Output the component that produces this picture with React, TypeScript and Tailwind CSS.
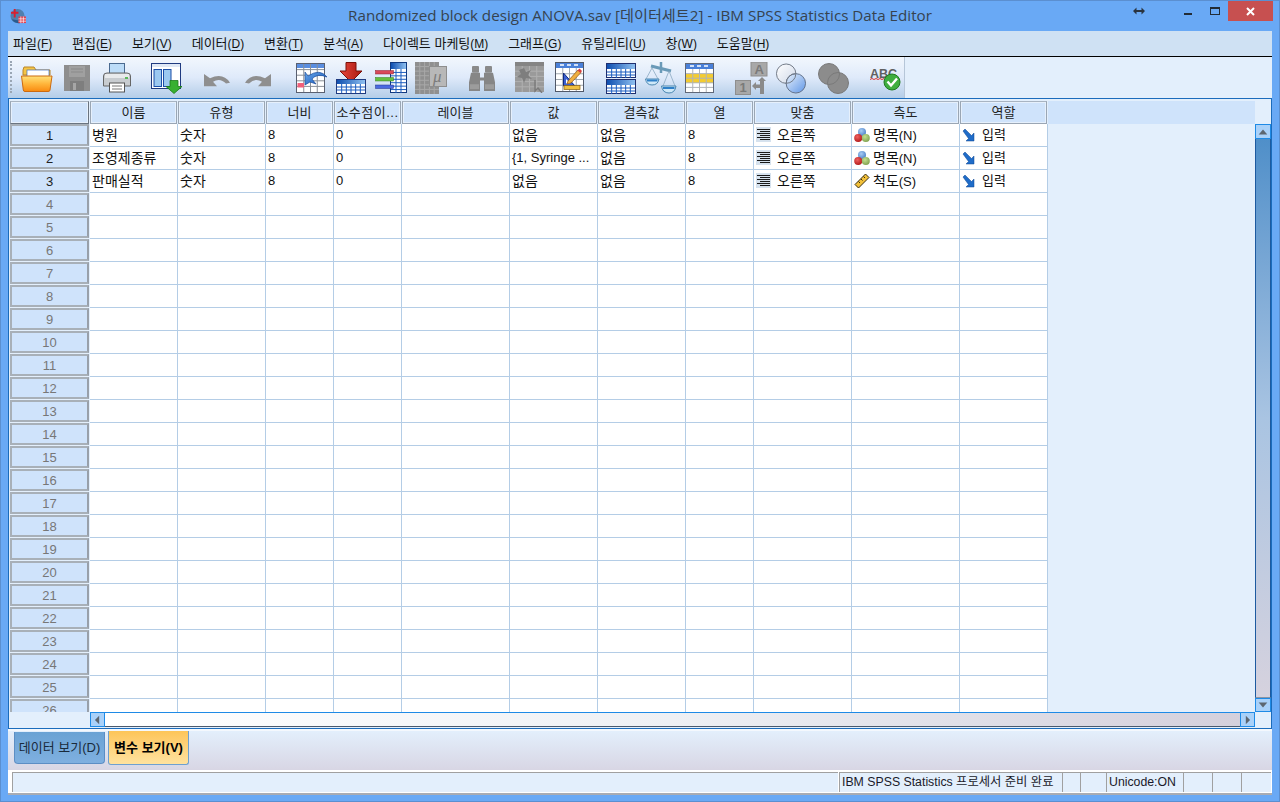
import React from "react";

const cols = "grid grid-cols-[80px_88px_88px_68px_68px_108px_88px_88px_68px_98px_108px_88px]";

function Defs() {
  return (
    <svg width="0" height="0" className="absolute">
      <defs>
        <linearGradient id="fo" x1="0" y1="0" x2="0" y2="1"><stop offset="0" stopColor="#ffe27a" /><stop offset="0.5" stopColor="#ffb63c" /><stop offset="1" stopColor="#f98a10" /></linearGradient>
        <linearGradient id="hb" x1="0" y1="0" x2="1" y2="0"><stop offset="0" stopColor="#0f4fb0" /><stop offset="1" stopColor="#8fc0f0" /></linearGradient>
        <linearGradient id="bl" x1="0" y1="0" x2="1" y2="1"><stop offset="0" stopColor="#e8f0fa" /><stop offset="1" stopColor="#5f97e8" /></linearGradient>
        <linearGradient id="wb" x1="0" y1="0" x2="1" y2="1"><stop offset="0" stopColor="#ffffff" /><stop offset="1" stopColor="#cfd8e8" /></linearGradient>
        <linearGradient id="ar" x1="0" y1="0" x2="1" y2="1"><stop offset="0" stopColor="#6aa8ea" /><stop offset="1" stopColor="#0d4fb5" /></linearGradient>
        <linearGradient id="red" x1="0" y1="0" x2="1" y2="0"><stop offset="0" stopColor="#e8483c" /><stop offset="1" stopColor="#a81810" /></linearGradient>
        <radialGradient id="rb" cx="0.4" cy="0.35" r="0.7"><stop offset="0" stopColor="#f06060" /><stop offset="1" stopColor="#b01818" /></radialGradient>
        <radialGradient id="gb" cx="0.4" cy="0.35" r="0.7"><stop offset="0" stopColor="#c4e090" /><stop offset="1" stopColor="#7ea04e" /></radialGradient>
        <radialGradient id="ub" cx="0.4" cy="0.35" r="0.7"><stop offset="0" stopColor="#a8ccf4" /><stop offset="1" stopColor="#4a80c8" /></radialGradient>
      </defs>
    </svg>
  );
}

function TableLines({ x, y, w, h, c, r, color = "#1a5cc0" }: { x: number; y: number; w: number; h: number; c: number; r: number; color?: string }) {
  const out: React.ReactNode[] = [];
  for (let i = 1; i < c; i++) { const p = x + (w * i) / c; out.push(<path key={"c" + i} d={`M${p} ${y}V${y + h}`} stroke={color} strokeWidth="1" />); }
  for (let i = 1; i < r; i++) { const p = y + (h * i) / r; out.push(<path key={"r" + i} d={`M${x} ${p}H${x + w}`} stroke={color} strokeWidth="1" />); }
  return <>{out}</>;
}

function Folder() {
  return (
    <svg width="32" height="28" viewBox="0 0 32 28" className="ml-[9px] mt-[8px] shrink-0">
      <path d="M2 5 L3 2 H13 L15 5 H29 V10 H2Z" fill="#f5c445" stroke="#b8862a" />
      <rect x="6" y="5" width="22" height="7" fill="#fff" stroke="#3f6fc0" strokeWidth="0.7" />
      <path d="M.5 11 H31 L29 25 Q29 26.5 27 26.5 H4 Q2.5 26.5 2.3 25Z" fill="url(#fo)" stroke="#cc6a10" />
    </svg>
  );
}
function Save() {
  return (
    <svg width="26" height="26" viewBox="0 0 26 26" className="ml-[11px] mt-[8px] shrink-0">
      <rect width="26" height="26" fill="#8e8e8e" />
      <rect x="5" y="1" width="16" height="11" fill="#a0a0a0" />
      <path d="M7 4H19M7 7H19" stroke="#8a8a8a" />
      <rect x="6" y="16" width="14" height="10" fill="#7e7e7e" />
      <rect x="9" y="18" width="3" height="7" fill="#a6a6a6" />
    </svg>
  );
}
function Printer() {
  return (
    <svg width="28" height="30" viewBox="0 0 28 30" className="ml-[13px] mt-[6px] shrink-0">
      <rect x="6.5" y=".5" width="15" height="11" fill="#bcdcf8" stroke="#4a6a90" />
      <path d="M.5 13 Q.5 10 4 10 H24 Q27.5 10 27.5 13 V23 H.5Z" fill="#c8ccd0" stroke="#666" />
      <rect x="2" y="11" width="24" height="4" fill="#e8eaec" />
      <rect x="22" y="14" width="3" height="2" fill="#5cb85c" />
      <rect x="6.5" y="20" width="15" height="9" fill="#fff" stroke="#555" />
      <path d="M9 23H19M9 26H19" stroke="#777" />
    </svg>
  );
}
function Goto() {
  return (
    <svg width="31" height="31" viewBox="0 0 31 31" className="ml-[20px] mt-[6px] shrink-0">
      <rect x=".5" y=".5" width="29" height="25" fill="#fff" stroke="#1f3a80" />
      <rect x="1" y="1" width="28" height="3" fill="#dfe8f5" />
      <rect x="3" y="6.5" width="7.5" height="17" fill="#9cc8f0" stroke="#1a4ea8" />
      <rect x="12.5" y="6.5" width="7.5" height="17" fill="#9cc8f0" stroke="#1a4ea8" />
      <path d="M19 17.5h8v6h4l-8 7-8-7h4z" fill="#38b030" stroke="#1c7a18" strokeWidth=".8" />
    </svg>
  );
}
function Undo({ flip }: { flip?: boolean }) {
  return (
    <svg width="27" height="14" viewBox="0 0 27 16" preserveAspectRatio="none" className={flip ? "ml-[15px] mt-[16px] shrink-0 -scale-x-100" : "ml-[21px] mt-[16px] shrink-0"}>
      <path d="M1 1 V15 H14 L10 10 Q17 5 23 12 L27 11 Q20 -1 7 6 L1 1Z" fill="#8f8f8f" />
    </svg>
  );
}
function Recall() {
  return (
    <svg width="31" height="31" viewBox="0 0 31 31" className="ml-[24px] mt-[6px] shrink-0">
      <rect x=".5" y=".5" width="28" height="29" fill="#fff" stroke="#5a6070" />
      <rect x="1" y="1" width="27" height="4" fill="#5a8ee0" />
      <TableLines x={1} y={1} w={27} h={28} c={4} r={5} color="#8a9098" />
      <rect x="1.5" y="20" width="6.5" height="4.5" fill="#f0607a" />
      <path d="M9 9 V22 L14 19 L20 21 L16 16 Q21 10 31 14 Q24 5 12 13 Z" fill="url(#ar)" stroke="#0f3f90" strokeWidth=".6" />
    </svg>
  );
}
function Insert() {
  return (
    <svg width="31" height="32" viewBox="0 0 31 32" className="ml-[9px] mt-[5px] shrink-0">
      <path d="M10 0.5 H20 V9 H26 L15 20 L4 9 H10Z" fill="url(#red)" stroke="#7a1008" />
      <rect x=".5" y="17.5" width="29" height="14" fill="#fff" stroke="#1f3a80" />
      <rect x="1" y="18" width="28" height="4" fill="url(#hb)" />
      <TableLines x={1} y={22} w={28} h={9} c={6} r={3} />
    </svg>
  );
}
function Vars() {
  return (
    <svg width="32" height="32" viewBox="0 0 32 32" className="ml-[8px] mt-[5px] shrink-0">
      <rect x="15.5" y=".5" width="16" height="30" fill="#fff" stroke="#123a80" />
      <rect x="16" y="1" width="15" height="6" fill="url(#hb)" />
      <TableLines x={16} y={7} w={15} h={24} c={3} r={7} />
      <rect x=".5" y="8.5" width="18" height="3.5" fill="#d84a5a" stroke="#902030" strokeWidth=".5" />
      <rect x=".5" y="15.5" width="18" height="3.5" fill="#64c040" stroke="#3a8020" strokeWidth=".5" />
      <rect x=".5" y="23" width="18" height="3.5" fill="#4a6ae0" stroke="#20308a" strokeWidth=".5" />
    </svg>
  );
}
function Mu() {
  return (
    <svg width="32" height="32" viewBox="0 0 32 32" className="ml-[8px] mt-[5px] shrink-0">
      <rect width="24" height="32" fill="#8f8f8f" />
      <TableLines x={0} y={0} w={24} h={32} c={5} r={7} color="#a8a8a8" />
      <rect x="14.5" y="4.5" width="17" height="20" fill="#b8b8b8" stroke="#8e8e8e" />
      <text x="18" y="20" fontFamily="'Liberation Serif',serif" fontStyle="italic" fontSize="17" fill="#7c7c7c">μ</text>
    </svg>
  );
}
function Bino() {
  return (
    <svg width="26" height="27" viewBox="0 0 26 28" preserveAspectRatio="none" className="ml-[22px] mt-[8px] shrink-0">
      <rect x="3" y="1" width="7" height="7" rx="1" fill="#8a8a8a" />
      <rect x="16" y="1" width="7" height="7" rx="1" fill="#8a8a8a" />
      <path d="M2 8h9v5h4V8h9l2 10v9H15V16h-4v11H0V18Z" fill="#868686" />
      <rect x="1" y="20" width="9" height="5" fill="#9c9c9c" />
      <rect x="16" y="20" width="9" height="5" fill="#9c9c9c" />
    </svg>
  );
}
function SplitGray() {
  return (
    <svg width="30" height="31" viewBox="0 0 30 31" className="ml-[20px] mt-[5px] shrink-0">
      <rect width="29" height="30" fill="#9a9a9a" />
      <rect width="29" height="4" fill="#848484" />
      <TableLines x={0} y={4} w={29} h={26} c={4} r={5} color="#b0b0b0" />
      <path d="M4 8 L9 6 L11 10 L16 8 L13 13 L17 17 L11 16 L9 21 L7 16 L2 15 L6 12Z" fill="#7e7e7e" />
      <path d="M20 18 V29 L23 26 L27 31" fill="none" stroke="#7a7a7a" strokeWidth="1.4" />
    </svg>
  );
}
function Calc() {
  return (
    <svg width="30" height="31" viewBox="0 0 30 31" className="ml-[10px] mt-[5px] shrink-0">
      <rect x=".5" y=".5" width="28" height="29" fill="#fff" stroke="#505868" />
      <rect x="1" y="1" width="27" height="5" fill="#4a80d8" />
      <path d="M5 3h4M12 3h4M19 3h4" stroke="#fff" strokeWidth="1.5" />
      <TableLines x={1} y={6} w={27} h={23} c={4} r={4} color="#a0a8b0" />
      <path d="M8.5 11 V24 H20Z" fill="#3a60d0" stroke="#102a80" />
      <path d="M11 17 V21.5 H15.5Z" fill="#fff" />
      <path d="M13 19 L23 8 L26 10.5 L16 21 L12 22Z" fill="#f0b040" stroke="#8a5010" strokeWidth=".7" />
      <path d="M22.5 8.5 L24.5 6.5 L27 9 L25.5 11Z" fill="#d84040" />
      <rect x="9" y="23.5" width="16" height="4" fill="#f0c040" stroke="#8a6010" strokeWidth=".7" />
    </svg>
  );
}
function SplitFile() {
  return (
    <svg width="30" height="31" viewBox="0 0 30 31" className="ml-[21px] mt-[6px] shrink-0">
      {[0, 16].map((y) => (
        <g key={y}>
          <rect x=".5" y={y + 0.5} width="29" height="14" fill="#fff" stroke="#1f2f70" />
          <rect x="1" y={y + 1} width="28" height="5" fill="url(#hb)" />
          <TableLines x={1} y={y + 6} w={28} h={9} c={6} r={3} />
        </g>
      ))}
    </svg>
  );
}
function Scale() {
  return (
    <svg width="32" height="32" viewBox="0 0 32 32" className="ml-[9px] mt-[5px] shrink-0">
      <path d="M16 0V11" stroke="#6a9ab8" strokeWidth="2.5" />
      <path d="M6 4 L26 9" stroke="#6a9ab8" strokeWidth="3" />
      <path d="M7 6 L1 17 M7 6 L13 17 M24 9 L18 24 M24 9 L30 24" stroke="#8aa8c0" strokeWidth=".8" />
      <path d="M.5 17 H14 Q13 23 7 23 Q1.5 23 .5 17Z" fill="#cfe8f8" stroke="#4a86b0" />
      <path d="M2 18.5 H12.5" stroke="#2f80c8" strokeWidth="2" />
      <path d="M16.5 24 H31 Q30 31 24 31 Q17.5 31 16.5 24Z" fill="#cfe8f8" stroke="#4a86b0" />
      <path d="M18 26 H29.5" stroke="#2f80c8" strokeWidth="2" />
    </svg>
  );
}
function YellowTable() {
  return (
    <svg width="30" height="31" viewBox="0 0 30 31" className="ml-[8px] mt-[6px] shrink-0">
      <rect x=".5" y=".5" width="28" height="29" fill="#fff" stroke="#606878" />
      <rect x="1" y="1" width="27" height="5" fill="#4a80d8" />
      <path d="M5 3h4M12 3h4M19 3h4" stroke="#fff" strokeWidth="1.5" />
      <rect x="1" y="11" width="27" height="9" fill="#f4cc30" />
      <TableLines x={1} y={6} w={27} h={23} c={4} r={5} color="#b0b4b8" />
    </svg>
  );
}
function LabelsA1() {
  return (
    <svg width="33" height="33" viewBox="0 0 33 33" className="ml-[20px] mt-[5px] shrink-0">
      <rect x="16" y="0" width="16" height="14" fill="#a8a8a8" stroke="#8e8e8e" />
      <text x="19.5" y="12" fontFamily="'Liberation Sans',sans-serif" fontWeight="700" fontSize="13" fill="#7a7a7a">A</text>
      <rect x=".5" y="18.5" width="15" height="14" fill="#a8a8a8" stroke="#8e8e8e" />
      <text x="4.5" y="30" fontFamily="'Liberation Sans',sans-serif" fontWeight="700" fontSize="13" fill="#7a7a7a">1</text>
      <path d="M17 24 L21 20 V22.5 H25 V19 H23 L27 15 L31 19 H29 V32 H25 V26 H21 V28Z" fill="#8a8a8a" />
    </svg>
  );
}
function Circles() {
  return (
    <svg width="32" height="31" viewBox="0 0 32 32" className="ml-[7px] mt-[6px] shrink-0">
      <circle cx="11" cy="11" r="10" fill="url(#wb)" stroke="#707884" />
      <circle cx="21" cy="21" r="10" fill="url(#bl)" stroke="#606f88" />
      <path d="M11 21 a10 10 0 0 1 10 -10 a10 10 0 0 1 -10 10" fill="none" stroke="#707884" />
    </svg>
  );
}
function CirclesGray() {
  return (
    <svg width="31" height="31" viewBox="0 0 31 31" className="ml-[11px] mt-[6px] shrink-0">
      <circle cx="11" cy="11" r="10.5" fill="#8c8c8c" />
      <circle cx="20" cy="20" r="10.5" fill="#8c8c8c" />
      <circle cx="20" cy="20" r="10.5" fill="none" stroke="#7a7a7a" />
      <circle cx="11" cy="11" r="10.5" fill="none" stroke="#7a7a7a" />
    </svg>
  );
}
function Spell() {
  return (
    <svg width="32" height="23" viewBox="0 0 32 23" className="ml-[21px] mt-[11px] shrink-0">
      <text x="0" y="9.5" fontFamily="'Liberation Sans',sans-serif" fontWeight="700" fontSize="12.5" fill="#606060">ABC</text>
      <path d="M0 11.5 l2 -1 l2 1 l2 -1 l2 1 l2 -1 l2 1 l2 -1" fill="none" stroke="#d83030" />
      <circle cx="22" cy="14" r="8" fill="#3fae3f" stroke="#1f7a20" />
      <path d="M17.5 13.5 l3.5 4 l6 -7" fill="none" stroke="#fff" strokeWidth="2.4" />
    </svg>
  );
}

function AppIcon() {
  return (
    <svg width="16" height="16" viewBox="0 0 17 17" className="shrink-0">
      <circle cx="8" cy="8.5" r="7.5" fill="#4f7fae" />
      <path d="M2 12a7.5 7.5 0 0 0 12 2z" fill="#2a5a8e" />
      <path d="M5 1v9M1 5h8" stroke="#d81f30" strokeWidth="2" />
      <rect x="9" y="9" width="8" height="7" fill="#e04050" />
      <path d="M9 11.5h8M9 14h8M11.5 9v7M14.2 9v7" stroke="#fff" strokeWidth=".7" />
    </svg>
  );
}

function AlignIcon() {
  return (
    <svg width="15" height="15" viewBox="0 0 15 15" className="shrink-0">
      <rect width="15" height="15" fill="#d6e2ee" />
      <path d="M1 2.5H14M4 4.5H14M1 6.5H14M4 8.5H14M1 10.5H14M4 12.5H14" stroke="#1a1a1a" strokeWidth="1" />
    </svg>
  );
}
function NominalIcon() {
  return (
    <svg width="16" height="16" viewBox="0 0 16 16" className="shrink-0">
      <circle cx="8" cy="5" r="4" fill="url(#ub)" />
      <circle cx="4.2" cy="11" r="4" fill="url(#rb)" />
      <circle cx="11.8" cy="11" r="4" fill="url(#gb)" />
    </svg>
  );
}
function ScaleIcon() {
  return (
    <svg width="16" height="16" viewBox="0 0 16 16" className="shrink-0">
      <path d="M1 11.5 L11.5 1 L15 4.5 L4.5 15Z" fill="#f2c038" stroke="#3a2e10" />
      <path d="M4.5 8.5l1.5 1.5M7 6l1.5 1.5M9.5 3.5l1.5 1.5" stroke="#3a2e10" />
    </svg>
  );
}
function RoleIcon() {
  return (
    <svg width="14" height="14" viewBox="0 0 14 14" className="shrink-0">
      <path d="M1 3 L3 1 L9.5 7.5 L12 5 V13 H4 L6.5 10.5Z" fill="#1f6cc8" stroke="#0f4590" strokeWidth=".5" />
    </svg>
  );
}

function Menu({ k, u }: { k: string; u: string }) {
  return (
    <span className="whitespace-nowrap">
      {k}
      <span className="text-[12px]">(<span className="underline underline-offset-2">{u}</span>)</span>
    </span>
  );
}

function Hd({ t, className = "" }: { t: string; className?: string }) {
  return (
    <div className={"h-[23px] flex items-center justify-center border border-[#9aa6b4] border-t-[#a8b4c2] bg-[#cfe3fb] outline outline-1 -outline-offset-2 outline-[#e6f0fc] text-[#222] whitespace-nowrap overflow-hidden mr-[1px] " + className}>
      {t}
    </div>
  );
}

function Cell({ children, className = "pl-[2px] gap-[6px]" }: { children?: React.ReactNode; className?: string }) {
  return (
    <div className={"h-[23px] border-r border-b border-[#b4cde6] bg-white flex items-center pb-[1px] whitespace-nowrap overflow-hidden text-[#111] " + className}>
      {children}
    </div>
  );
}

const data = [
  ["병원", "숫자", "8", "0", "", "없음", "없음", "8", "nominal"],
  ["조영제종류", "숫자", "8", "0", "", "{1, Syringe ...", "없음", "8", "nominal"],
  ["판매실적", "숫자", "8", "0", "", "없음", "없음", "8", "scale"],
];

const heads = ["이름", "유형", "너비", "소수점이...", "레이블", "값", "결측값", "열", "맞춤", "측도", "역할"];

function Row({ n }: { n: number }) {
  const d = data[n - 1];
  return (
    <div className={cols}>
      <div className={"h-[22px] mb-[1px] mr-[1px] flex items-center justify-center border-2 border-[#a8b0b8] border-r-[#98a0aa] bg-[#cfe3fb] " + (d ? "text-[#222]" : "text-[#777]")}>{n}</div>
      {d ? (
        <>
          {d.slice(0, 8).map((t, i) => (
            <Cell key={i} className={/[가-힣]/.test(t) ? "pl-[2px] text-[14px]" : "pl-[2px]"}>{t}</Cell>
          ))}
          <Cell><AlignIcon /><span className="text-[14px]">오른쪽</span></Cell>
          <Cell className="pl-[2px] gap-[3px]">
            {d[8] === "nominal" ? <NominalIcon /> : <ScaleIcon />}
            <span>
              <span className="text-[14px]">{d[8] === "nominal" ? "명목" : "척도"}</span>
              {d[8] === "nominal" ? "(N)" : "(S)"}
            </span>
          </Cell>
          <Cell className="pl-[2px] gap-[6px]"><RoleIcon /><span>입력</span></Cell>
        </>
      ) : (
        Array.from({ length: 11 }).map((_, i) => <Cell key={i} />)
      )}
    </div>
  );
}

function ArrowBtn({ dir, className = "" }: { dir: "u" | "d" | "l" | "r"; className?: string }) {
  const p = { u: "M2 10 L7 4 L12 10Z", d: "M2 4 L12 4 L7 10Z", l: "M9 2 V12 L4 7Z", r: "M5 2 V12 L10 7Z" }[dir];
  return (
    <div className={"bg-[#a9d1f9] border border-[#1e8ae6] flex items-center justify-center shrink-0 " + className}>
      <svg width="14" height="12" viewBox="0 0 14 14"><path d={p} fill="#5c6670" /></svg>
    </div>
  );
}

export default function App() {
  return (
    <div className="w-[1280px] h-[802px] overflow-hidden flex flex-col bg-[#69a9f5] border border-[#5b8fd0] text-[13px] leading-none font-['Liberation_Sans','Noto_Sans_CJK_KR',sans-serif]">
      <Defs />
      {/* title bar */}
      <div className="h-[30px] shrink-0 grid grid-cols-[1fr_auto_1fr]">
        <div className="flex items-center pl-[9px] pb-[1px]"><AppIcon /></div>
        <div className="flex items-center text-[15.2px] text-[#36434f] font-['Open_Sans','Noto_Sans_CJK_KR',sans-serif] whitespace-nowrap">
          Randomized block design ANOVA.sav [데이터세트2] - IBM SPSS Statistics Data Editor
        </div>
        <div className="flex justify-end items-start pr-[6px]">
          <svg width="12" height="8" viewBox="0 0 12 8" className="mt-[6px] mr-[39px]"><path d="M0 4 L3.5 .5 V3 H8.5 V.5 L12 4 L8.5 7.5 V5 H3.5 V7.5Z" fill="#2a3440" /></svg>
          <div className="w-[8px] h-[2px] bg-[#222c36] mt-[12px] mr-[18px]" />
          <div className="w-[10px] h-[8px] border border-t-[2px] border-[#222c36] mt-[6px] mr-[8px]" />
          <div className="w-[45px] h-[20px] bg-[#c75050] flex items-center justify-center">
            <svg width="9" height="9" viewBox="0 0 9 9"><path d="M1 1 L8 8 M8 1 L1 8" stroke="#fff" strokeWidth="2" /></svg>
          </div>
        </div>
      </div>

      <div className="mx-[7px] flex-1 flex flex-col">
        {/* menu */}
        <div className="h-[26px] shrink-0 bg-[#cfe1f3] border-b border-black pl-[5px] flex items-center gap-[19.85px] text-[#111] pb-[1px]">
          <Menu k="파일" u="F" />
          <Menu k="편집" u="E" />
          <Menu k="보기" u="V" />
          <Menu k="데이터" u="D" />
          <Menu k="변환" u="T" />
          <Menu k="분석" u="A" />
          <Menu k="다이렉트 마케팅" u="M" />
          <Menu k="그래프" u="G" />
          <Menu k="유틸리티" u="U" />
          <Menu k="창" u="W" />
          <Menu k="도움말" u="H" />
        </div>

        {/* toolbar */}
        <div className="h-[41px] shrink-0 flex bg-[#e3effc]">
          <div className="w-[897px] h-full flex bg-gradient-to-b from-[#f2f7fd] via-[#dfeafa] to-[#b4cde8] border-r border-[#b6c6d8] pl-[2px]">
            <div className="w-[2px] h-[32px] mt-[4px] border-l-2 border-dotted border-[#9aa6b4] shrink-0" />
            <Folder />
            <Save />
            <Printer />
            <Goto />
            <Undo />
            <Undo flip />
            <Recall />
            <Insert />
            <Vars />
            <Mu />
            <Bino />
            <SplitGray />
            <Calc />
            <SplitFile />
            <Scale />
            <YellowTable />
            <LabelsA1 />
            <Circles />
            <CirclesGray />
            <Spell />
          </div>
        </div>

        {/* grid */}
        <div className="h-[631px] shrink-0 border border-[#1b6cbc] bg-[#e3effc] flex flex-col">
          <div className="h-[613px] shrink-0 flex pt-[2px]">
            <div className="w-[1246px] pl-[1px] flex flex-col overflow-hidden">
              <div className="flex shrink-0">
                <div className={cols}>
                  <Hd t="" className="border-r-[#6a7480] border-b-[#6a7480]" />
                  {heads.map((h) => <Hd key={h} t={h} className={h === "소수점이..." ? "tracking-[0.5px]" : ""} />)}
                </div>
                <div className="flex-1 h-[23px] bg-[#cfe3fb]" />
              </div>
              <div className="flex-1 overflow-hidden">
                {Array.from({ length: 26 }).map((_, i) => <Row key={i} n={i + 1} />)}
              </div>
            </div>
            <div className="w-[16px] pt-[23px] flex flex-col">
              <ArrowBtn dir="u" className="h-[15px]" />
              <div className="flex-1 border-x border-[#1d5aa0] bg-gradient-to-b from-[#4f8fc9] via-[#a9c4e2] to-[#d6d2de] border-b border-b-[#8a94a4]" />
              <ArrowBtn dir="d" className="h-[14px]" />
            </div>
          </div>
          <div className="h-[15px] shrink-0 flex pl-[81px] pr-[16px]">
            <ArrowBtn dir="l" className="w-[15px]" />
            <div className="flex-1 bg-gradient-to-r from-white via-[#eef0f4] to-[#d4d0dc] border-y border-t-[#1e8ae6] border-b-[#4a5a6e]" />
            <ArrowBtn dir="r" className="w-[15px]" />
          </div>
        </div>

        {/* tabs */}
        <div className="h-[41px] shrink-0 border-t-2 border-[#f4f8fd] bg-gradient-to-b from-[#e3effc] to-[#d8d6e4] flex items-start pl-[6px] gap-[3px]">
          <div className="w-[91px] h-[32px] mt-[1px] rounded-b-[4px] bg-gradient-to-b from-[#6aa2d4] to-[#7fb0e0] border-x border-b border-[#5c8ec4] flex items-center justify-center text-[#1a2a3a]">
            데이터 보기(D)
          </div>
          <div className="w-[81px] h-[34px] rounded-b-[3px] bg-gradient-to-b from-[#fdc558] to-[#ffe29e] border-x border-b border-[#6ea0d0] flex items-center justify-center font-bold text-black whitespace-nowrap">
            변수 보기(V)
          </div>
        </div>

        {/* status */}
        <div className="h-[25px] shrink-0 bg-white border-b-2 border-[#a8acb4] pl-[4px] pr-[1px] pt-[2px] pb-[1px] flex text-[12.3px] text-[#1a1a2a]">
          <div className="flex-1 bg-[#e3effc] border-l border-t border-[#a0a0a0]" />
          <div className="w-[224px] ml-[1px] bg-[#e3effc] border-x border-t border-[#a0a0a0] flex items-center pl-[2px] whitespace-nowrap">IBM SPSS Statistics 프로세서 준비 완료</div>
          <div className="w-[17px] bg-[#e3effc] border-t border-[#a0a0a0]" />
          <div className="w-[26px] bg-[#e3effc] border-l border-t border-[#a0a0a0]" />
          <div className="w-[78px] bg-[#e3effc] border-x border-t border-[#a0a0a0] flex items-center pl-[2px]">Unicode:ON</div>
          <div className="w-[29px] bg-[#e3effc] border-t border-r border-[#a0a0a0]" />
          <div className="w-[29px] bg-[#e3effc] border-t border-r border-[#a0a0a0]" />
          <div className="w-[29px] bg-[#e3effc] border-t border-[#a0a0a0]" />
        </div>
      </div>
      <div className="h-[7px] shrink-0" />
    </div>
  );
}
